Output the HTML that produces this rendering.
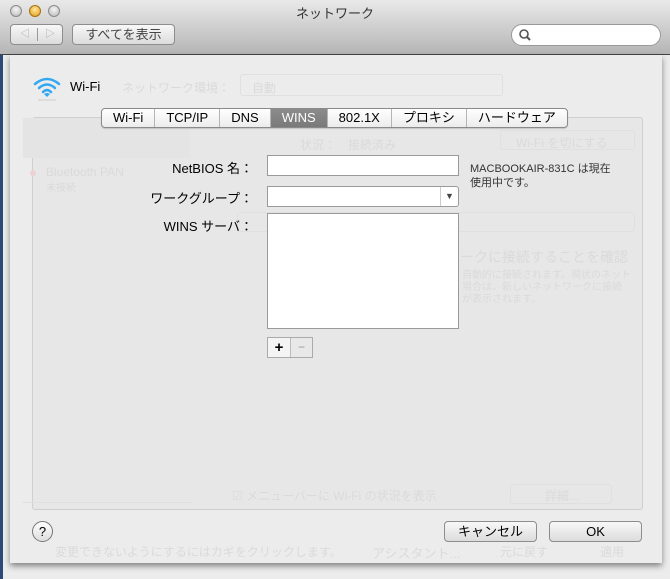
<!DOCTYPE html>
<html><head><meta charset="utf-8"><style>
*{box-sizing:border-box;margin:0;padding:0}
body{width:670px;height:579px;overflow:hidden;background:#ececec;font-family:"Liberation Sans","Noto Sans CJK JP",sans-serif;position:relative;font-size:12px;color:#000}
.abs{position:absolute}
.title{left:0;top:0;width:670px;height:55px;background:linear-gradient(#e9e9e9,#b5b5b5);border-bottom:1px solid #444}
.lamp{top:5px;width:12px;height:12px;border-radius:50%;background:radial-gradient(circle at 50% 35%,#f4f4f4,#b8b8b8);border:1px solid #8a8a8a}
.btn{background:linear-gradient(#f8f8f8,#dcdcdc);border:1px solid #8d8d8d;border-radius:4px}
.sheet{left:10px;top:55px;width:652px;height:508px;background:#ececec;box-shadow:0 3px 6px rgba(0,0,0,.45)}
.ghost{color:#dadada}
.inner{left:32px;top:117px;width:611px;height:393px;border:1px solid #cfcfcf;border-radius:3px;background:#e7e7e7}
.tabs{left:101px;top:108px;height:20px;display:flex;border:1px solid #8a8a8a;border-radius:4px;background:linear-gradient(#fff,#ececec);overflow:hidden;box-shadow:0 1px 1px rgba(0,0,0,.15)}
.tabs div{padding:0 11px;line-height:18px;font-size:13px;border-right:1px solid #b5b5b5}
.tabs div:last-child{border-right:none}
.tabs .sel{background:linear-gradient(#8c8c8c,#7a7a7a);color:#fff}
.lbl{font-size:13px;text-align:right;width:150px}
.field{background:#fff;border:1px solid #9a9a9a}
.gbox{border:1px solid #e0e0e0;border-radius:3px}
</style></head><body>
<div class="abs" style="left:0;top:0;width:3px;height:579px;background:#2c4a78"></div>
<div class="abs title"></div>
<div class="abs lamp" style="left:10px"></div>
<div class="abs lamp" style="left:29px;background:radial-gradient(circle at 50% 35%,#ffe79a,#e29a1a);border-color:#a86e10"></div>
<div class="abs lamp" style="left:48px"></div>
<div class="abs" style="left:0;top:3px;width:670px;text-align:center;font-size:13px;color:#333">ネットワーク</div>
<div class="abs btn" style="left:10px;top:24px;width:53px;height:21px;color:#aaa;font-size:10px;line-height:19px"><span style="position:absolute;left:9px">◁</span><span style="position:absolute;left:26px;top:3px;width:1px;height:13px;background:#999"></span><span style="position:absolute;left:34px">▷</span></div>
<div class="abs btn" style="left:72px;top:24px;width:103px;height:21px;text-align:center;line-height:19px;font-size:13px;color:#444">すべてを表示</div>
<div class="abs" style="left:511px;top:24px;width:150px;height:22px;background:#fff;border:1px solid #999;border-radius:11px"><svg width="14" height="14" style="position:absolute;left:6px;top:3px"><circle cx="6" cy="6" r="4" fill="none" stroke="#555" stroke-width="1.6"/><line x1="9" y1="9" x2="12" y2="12" stroke="#555" stroke-width="2"/></svg></div>

<div class="abs sheet"></div>
<svg class="abs" style="left:32px;top:74px" width="30" height="28"><g fill="none" stroke="#33a8f2" stroke-width="2.5" stroke-linecap="round"><path d="M3 10 Q15 0 27 10"/><path d="M7 14 Q15 7 23 14"/><path d="M11 18 Q15 14 19 18"/></g><path d="M15 23 L12 20 Q15 18 18 20Z" fill="#33a8f2"/><line x1="6" y1="26" x2="24" y2="26" stroke="#ccc"/></svg>
<div class="abs" style="left:70px;top:79px;font-size:13px">Wi-Fi</div>
<div class="abs ghost" style="left:122px;top:79px;font-size:12px">ネットワーク環境：</div>
<div class="abs gbox" style="left:240px;top:74px;width:263px;height:22px"></div>
<div class="abs ghost" style="left:252px;top:79px">自動</div>
<div class="abs inner"></div>
<div class="abs" style="left:23px;top:118px;width:167px;height:40px;background:#e4e4e4"></div>
<div class="abs ghost" style="left:46px;top:165px;font-size:12px">Bluetooth PAN</div>
<div class="abs ghost" style="left:46px;top:179px;font-size:10px">未接続</div>
<div class="abs" style="left:30px;top:170px;width:6px;height:6px;border-radius:50%;background:#ecd2d2"></div>
<div class="abs ghost" style="left:300px;top:136px">状況：　接続済み</div>
<div class="abs gbox" style="left:500px;top:130px;width:135px;height:20px"></div>
<div class="abs ghost" style="left:516px;top:134px">Wi-Fi を切にする</div>
<div class="abs gbox" style="left:237px;top:212px;width:398px;height:20px"></div>
<div class="abs ghost" style="left:460px;top:247px;font-size:14px">ークに接続することを確認</div>
<div class="abs ghost" style="left:462px;top:270px;font-size:10px;line-height:12px">自動的に接続されます。現状のネット<br>場合は、新しいネットワークに接続<br>が表示されます。</div>
<div class="abs ghost" style="left:232px;top:487px">☑ メニューバーに Wi-Fi の状況を表示</div>
<div class="abs gbox" style="left:510px;top:484px;width:102px;height:20px"></div>
<div class="abs ghost" style="left:545px;top:487px">詳細...</div>
<div class="abs" style="left:22px;top:502px;width:170px;height:12px;border-top:1px solid #e0e0e0"></div>
<div class="abs ghost" style="left:55px;top:543px">変更できないようにするにはカギをクリックします。</div>
<div class="abs ghost" style="left:372px;top:543px;font-size:13px">アシスタント...</div>
<div class="abs ghost" style="left:500px;top:543px">元に戻す</div>
<div class="abs ghost" style="left:600px;top:543px">適用</div>

<div class="abs tabs"><div>Wi-Fi</div><div>TCP/IP</div><div>DNS</div><div class="sel">WINS</div><div>802.1X</div><div>プロキシ</div><div>ハードウェア</div></div>

<div class="abs lbl" style="left:103px;top:158px">NetBIOS 名：</div>
<div class="abs field" style="left:267px;top:155px;width:192px;height:21px"></div>
<div class="abs" style="left:470px;top:162px;font-size:11px;color:#333;line-height:14px">MACBOOKAIR-831C は現在<br>使用中です。</div>
<div class="abs lbl" style="left:103px;top:188px">ワークグループ：</div>
<div class="abs field" style="left:267px;top:186px;width:192px;height:21px;border-radius:0 3px 3px 0"><div style="position:absolute;right:0;top:0;width:18px;height:19px;border-left:1px solid #ccc;font-size:9px;text-align:center;line-height:19px;color:#444">▼</div></div>
<div class="abs lbl" style="left:103px;top:216px">WINS サーバ：</div>
<div class="abs field" style="left:267px;top:213px;width:192px;height:116px"></div>
<div class="abs" style="left:267px;top:337px;width:46px;height:21px;border:1px solid #aaa;background:#f4f4f4"><div style="position:absolute;left:0;width:22px;text-align:center;line-height:19px;font-size:15px;font-weight:bold">+</div><div style="position:absolute;left:22px;top:0;width:1px;height:19px;background:#bbb"></div><div style="position:absolute;left:23px;width:21px;height:19px;text-align:center;line-height:19px;color:#999;background:#e8e8e8">−</div></div>

<div class="abs" style="left:32px;top:521px;width:21px;height:21px;border-radius:50%;border:1px solid #777;background:linear-gradient(#fff,#ddd);text-align:center;line-height:19px;font-size:13px">?</div>
<div class="abs btn" style="left:444px;top:521px;width:93px;height:21px;text-align:center;line-height:19px;font-size:13px">キャンセル</div>
<div class="abs btn" style="left:549px;top:521px;width:93px;height:21px;text-align:center;line-height:19px;font-size:13px">OK</div>
</body></html>
